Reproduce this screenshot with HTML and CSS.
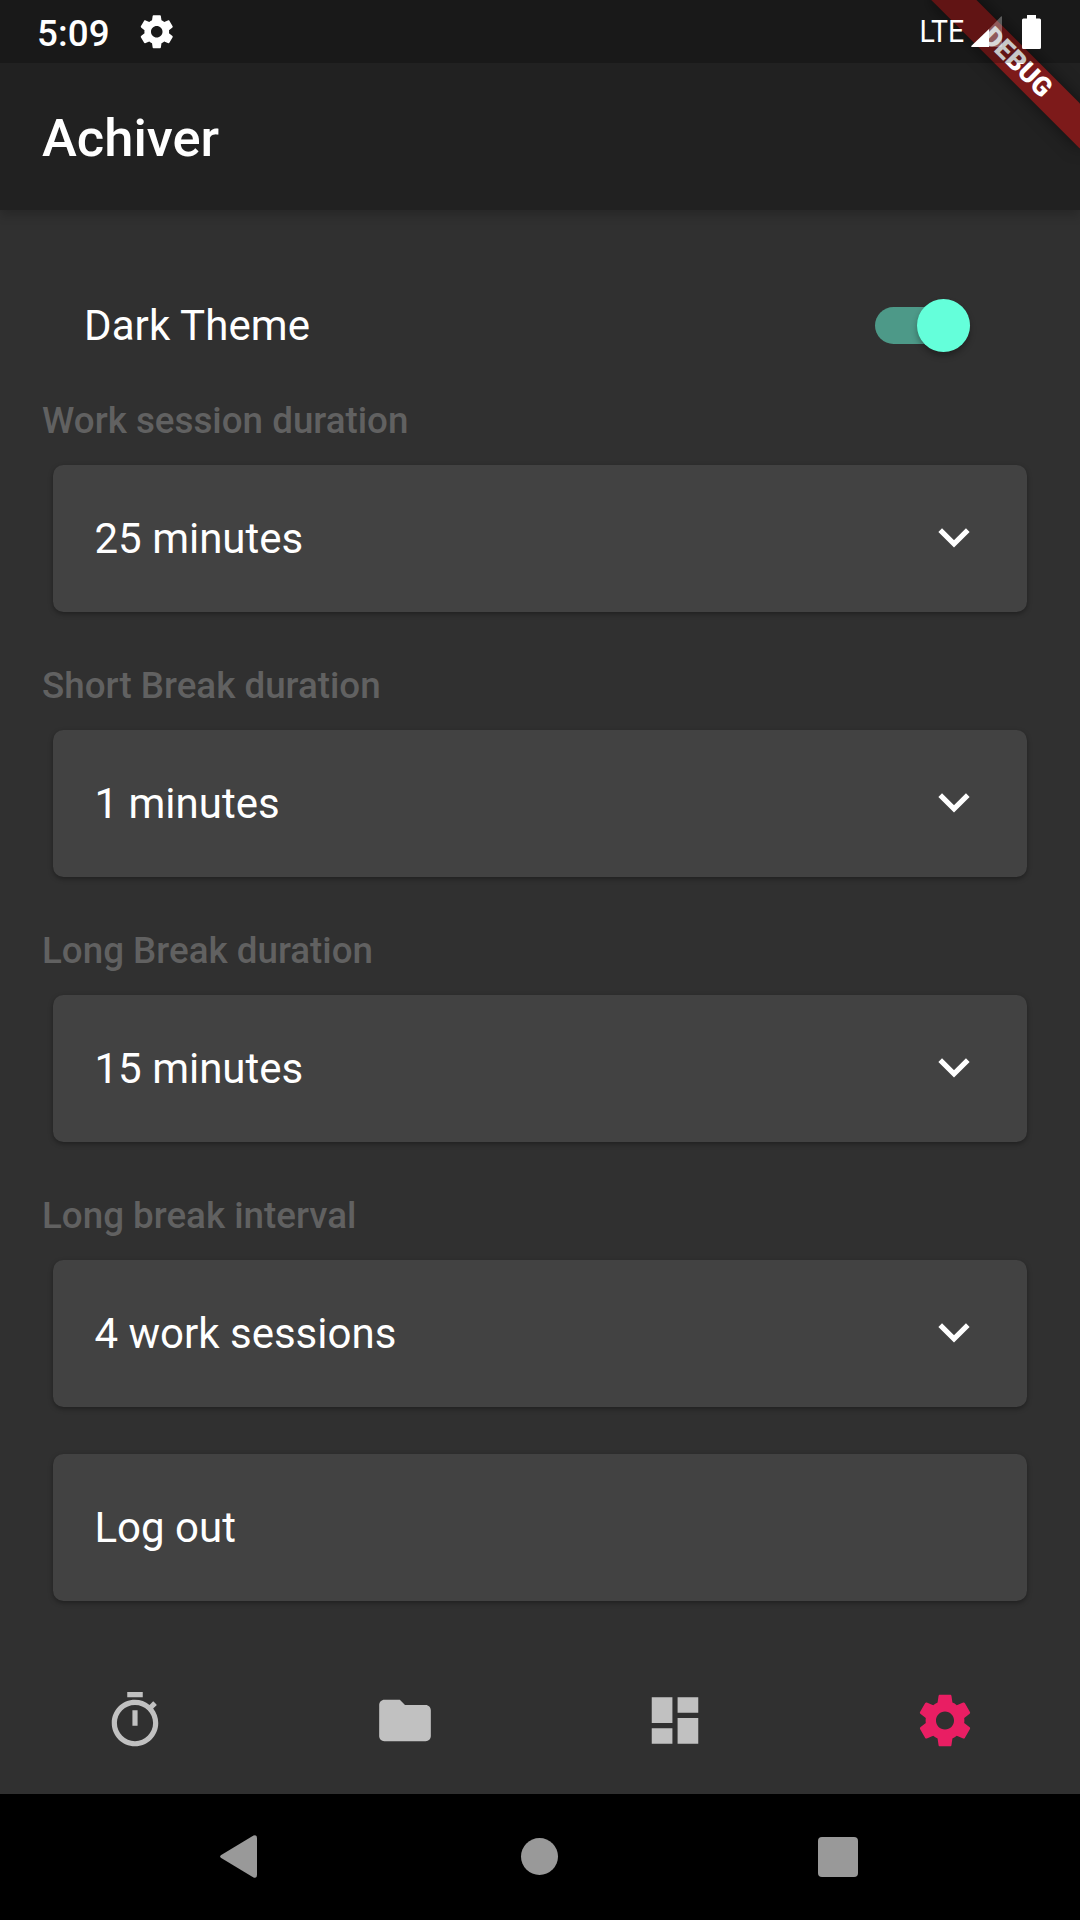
FILE: index.html
```html
<!DOCTYPE html>
<html lang="en">
<head>
<meta charset="utf-8">
<title>Achiver</title>
<link rel="stylesheet" href="styles.css">
</head>
<body>
<div class="screen">
  <header class="header">
    <div class="status">
      <span class="clock">5:09</span>
      <svg class="status-gear" viewBox="0 0 24 24"><path d="M19.43 12.98c.04-.32.07-.64.07-.98s-.03-.66-.07-.98l2.11-1.65c.19-.15.24-.42.12-.64l-2-3.46c-.12-.22-.39-.3-.61-.22l-2.49 1c-.52-.4-1.08-.73-1.69-.98l-.38-2.65C14.46 2.18 14.25 2 14 2h-4c-.25 0-.46.18-.49.42l-.38 2.65c-.61.25-1.17.59-1.69.98l-2.49-1c-.23-.09-.49 0-.61.22l-2 3.46c-.13.22-.07.49.12.64l2.11 1.65c-.04.32-.07.65-.07.98s.03.66.07.98l-2.11 1.65c-.19.15-.24.42-.12.64l2 3.46c.12.22.39.3.61.22l2.49-1c.52.4 1.08.73 1.69.98l.38 2.65c.03.24.24.42.49.42h4c.25 0 .46-.18.49-.42l.38-2.65c.61-.25 1.17-.59 1.69-.98l2.49 1c.23.09.49 0 .61-.22l2-3.46c.12-.22.07-.49-.12-.64l-2.11-1.65zM12 15.5c-1.93 0-3.5-1.57-3.5-3.5s1.57-3.5 3.5-3.5 3.5 1.57 3.5 3.5-1.57 3.5-3.5 3.5z"/></svg>
      <span class="network">LTE</span>
      <svg class="signal" viewBox="0 0 31 31"><path d="M31 1v28.500q0 1.500-1.500 1.500H18V13L30 .6q1-.8 1 .4z" opacity=".3"/><path d="M18 13v18H1q-1.500 0-.5-1.300z"/></svg>
      <svg class="battery" viewBox="0 0 19 34"><path d="M5 0h9v3.500h3.500q1.500 0 1.500 1.500v27.500q0 1.500-1.500 1.500h-16Q0 34 0 32.500V5q0-1.500 1.500-1.500H5z"/></svg>
    </div>
    <h1 class="title">Achiver</h1>
    <div class="banner-clip"><div class="banner">DEBUG</div></div>
  </header>

  <main class="settings">
    <div class="theme-row">
      <span class="theme-name">Dark Theme</span>
      <span class="switch"><span class="thumb"></span></span>
    </div>

    <section class="group">
      <h2 class="label">Work session duration</h2>
      <div class="card"><span>25 minutes</span><svg class="chevron" viewBox="0 0 32 20"><path d="M2.200 2.200 16 15.800 29.800 2.200"/></svg></div>
    </section>
    <section class="group">
      <h2 class="label">Short Break duration</h2>
      <div class="card"><span>1 minutes</span><svg class="chevron" viewBox="0 0 32 20"><path d="M2.200 2.200 16 15.800 29.800 2.200"/></svg></div>
    </section>
    <section class="group">
      <h2 class="label">Long Break duration</h2>
      <div class="card"><span>15 minutes</span><svg class="chevron" viewBox="0 0 32 20"><path d="M2.200 2.200 16 15.800 29.800 2.200"/></svg></div>
    </section>
    <section class="group">
      <h2 class="label">Long break interval</h2>
      <div class="card"><span>4 work sessions</span><svg class="chevron" viewBox="0 0 32 20"><path d="M2.200 2.200 16 15.800 29.800 2.200"/></svg></div>
    </section>
    <div class="card logout"><span>Log out</span></div>
  </main>

  <nav class="tabs">
    <svg class="tab" viewBox="0 0 24 24"><path d="M15 1H9v2h6V1zm-4 13h2V8h-2v6zm8.030-6.610l1.420-1.420c-.43-.51-.9-.99-1.410-1.410l-1.420 1.420C16.070 4.740 14.120 4 12 4c-4.970 0-9 4.030-9 9s4.020 9 9 9 9-4.030 9-9c0-2.120-.74-4.070-1.970-5.610zM12 20c-3.870 0-7-3.130-7-7s3.130-7 7-7 7 3.130 7 7-3.130 7-7 7z"/></svg>
    <svg class="tab" viewBox="0 0 24 24"><path d="M10 4H4c-1.100 0-1.990.9-1.990 2L2 18c0 1.100.9 2 2 2h16c1.100 0 2-.9 2-2V8c0-1.100-.9-2-2-2h-8l-2-2z"/></svg>
    <svg class="tab" viewBox="0 0 24 24"><path d="M3 13h8V3H3v10zm0 8h8v-6H3v6zm10 0h8V11h-8v10zm0-18v6h8V3h-8z"/></svg>
    <svg class="tab active" viewBox="0 0 24 24"><path d="M19.430 12.980c.04-.32.07-.64.07-.98s-.03-.66-.07-.98l2.110-1.650c.19-.15.24-.42.12-.64l-2-3.460c-.12-.22-.39-.3-.61-.22l-2.490 1c-.52-.4-1.080-.73-1.690-.98l-.38-2.650C14.460 2.180 14.250 2 14 2h-4c-.25 0-.46.18-.49.42l-.38 2.650c-.61.25-1.170.59-1.690.98l-2.490-1c-.23-.09-.49 0-.61.22l-2 3.460c-.13.22-.07.49.12.64l2.110 1.650c-.04.32-.07.65-.07.98s.03.66.07.98l-2.110 1.650c-.19.15-.24.42-.12.64l2 3.460c.12.22.39.3.61.22l2.490-1c.52.4 1.080.73 1.690.98l.38 2.650c.03.24.24.42.49.42h4c.25 0 .46-.18.49-.42l.38-2.650c.61-.25 1.170-.59 1.690-.98l2.490 1c.23.09.49 0 .61-.22l2-3.460c.12-.22.07-.49-.12-.64l-2.110-1.650zM12 15.500c-1.930 0-3.500-1.570-3.500-3.500s1.570-3.500 3.500-3.500 3.500 1.570 3.500 3.500-1.570 3.500-3.500 3.500z"/></svg>
  </nav>

  <div class="system-nav">
    <svg class="key back" viewBox="0 0 37 43"><path d="M1.200 20 33.500.6Q37-.8 37 3v37q0 3.800-3.500 2.400L1.200 23Q-1 21.500 1.200 20z"/></svg>
    <span class="key home"></span>
    <span class="key recent"></span>
  </div>
</div>
</body>
</html>
```
FILE: styles.css
```css
* { box-sizing: border-box; }
body { margin: 0; background: #303030; }
svg { display: block; }

.screen {
  width: 1080px;
  height: 1920px;
  overflow: hidden;
  display: flex;
  flex-direction: column;
  background: #303030;
  color: #fff;
  font-family: Roboto, "Liberation Sans", sans-serif;
  font-size: 42px;
}

/* Header */
.header {
  position: relative;
  flex: none;
  height: 210px;
  background: #212121;
  box-shadow: 0 5px 10px rgba(0, 0, 0, .2);
}
.status {
  position: relative;
  z-index: 2;
  height: 63px;
  display: flex;
  align-items: center;
  padding: 0 39px 0 37px;
  background: rgba(0, 0, 0, .22);
}
.status svg { fill: #fff; }
.clock { font-size: 36.750px; font-weight: 500; line-height: 44px; padding-top: 5px; letter-spacing: .1px; }
.status-gear { width: 39.500px; height: 39.500px; margin-left: 27.500px; }
.network {
  margin-left: auto;
  font-size: 32px;
  line-height: 40px;
  padding-bottom: 2px;
  transform: scaleX(.89);
  transform-origin: right;
}
.signal { width: 31px; height: 31px; margin-left: 7px; }
.battery { width: 19px; height: 34px; margin-left: 20px; }
.title {
  margin: 0;
  padding-left: 42px;
  font-size: 52.500px;
  font-weight: 500;
  line-height: 151px;
}
.banner-clip {
  position: absolute;
  top: 0;
  right: 0;
  width: 210px;
  height: 210px;
  overflow: hidden;
}
.banner {
  position: absolute;
  left: 41.900px;
  top: 47.400px;
  width: 210px;
  height: 31.500px;
  transform: rotate(45deg);
  background: #7d1a1a;
  box-shadow: 0 0 16px rgba(0, 0, 0, .5);
  font-size: 26.800px;
  font-weight: 900;
  line-height: 31.500px;
  text-align: center;
}

/* Settings */
.settings { flex: 1; padding: 42px 42px 0; }
.theme-row {
  height: 147px;
  padding: 0 68px 0 42px;
  display: flex;
  align-items: center;
  justify-content: space-between;
}
.theme-name { letter-spacing: .1px; }
.switch {
  display: flex;
  align-items: center;
  justify-content: flex-end;
  width: 95px;
  height: 37px;
  border-radius: 18.500px;
  background: #4d9988;
}
.thumb {
  flex: none;
  width: 53px;
  height: 53px;
  border-radius: 50%;
  background: #64ffda;
  box-shadow: 0 4px 6px rgba(0, 0, 0, .3);
}
.group { margin-bottom: 52px; }
.label {
  margin: 0 0 23px;
  padding-top: 1px;
  font-size: 36.750px;
  font-weight: 500;
  line-height: 42px;
  color: #616161;
}
.card {
  height: 147px;
  margin: 0 11px 0 10.500px;
  padding: 0 57px 0 42px;
  display: flex;
  align-items: center;
  justify-content: space-between;
  border-radius: 10.500px;
  background: #424242;
  box-shadow: 0 2px 5px rgba(0, 0, 0, .35);
}
.chevron {
  width: 32px;
  height: 20px;
  margin-bottom: 1px;
  fill: none;
  stroke: #fff;
  stroke-width: 5.200px;
}
.logout { margin-top: -5px; }

/* Bottom tabs */
.tabs {
  flex: none;
  height: 147px;
  display: grid;
  grid-template-columns: repeat(4, 1fr);
  place-items: center;
}
.tab { width: 62px; height: 63px; fill: #c1c1c1; }
.tab.active { fill: #e91e63; }

/* System keys */
.system-nav {
  flex: none;
  height: 126px;
  display: flex;
  align-items: center;
  justify-content: space-between;
  padding: 0 222px 0 220px;
  background: #000;
}
.key { background: #999; }
.back { width: 37px; height: 43px; margin-bottom: 1px; background: none; fill: #999; }
.home { width: 37px; height: 37px; border-radius: 50%; margin: 0 0 1px 3px; }
.recent { width: 40px; height: 40px; border-radius: 4px; }
```
